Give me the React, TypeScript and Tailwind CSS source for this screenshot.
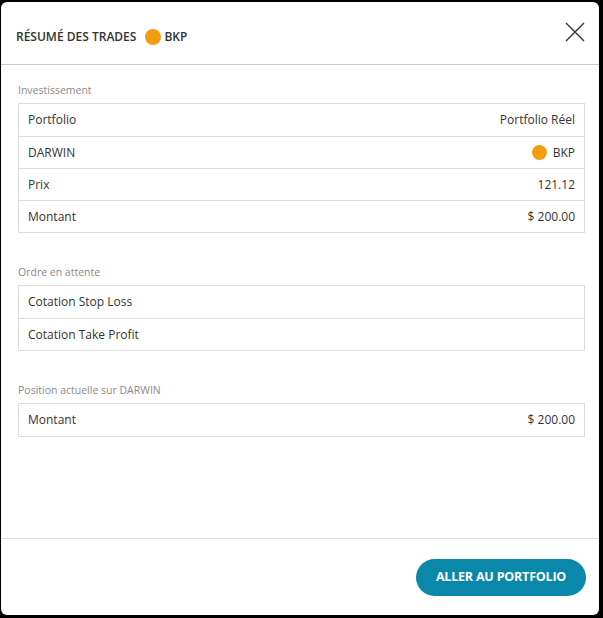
import React from 'react';

type Row = { label: string; value?: React.ReactNode };

const Dot: React.FC<{ className?: string }> = ({ className = '' }) => (
  <span className={`inline-block rounded-full bg-[#f39c12] ${className}`} />
);

const Section: React.FC<{ title: string; rows: Row[]; className?: string }> = ({ title, rows, className = '' }) => (
  <div className={className}>
    <div className="text-[10.5px] leading-[14px] text-[#8a8a8a] mb-[6px]">{title}</div>
    <div className="border border-[#dcdcdc]">
      {rows.map((row, i) => (
        <div
          key={row.label}
          className={`flex items-center justify-between h-[32px] px-[9px] text-[12px] text-[#333] ${
            i > 0 ? 'border-t border-[#dcdcdc]' : ''
          }`}
        >
          <span>{row.label}</span>
          {row.value && <span className="flex items-center">{row.value}</span>}
        </div>
      ))}
    </div>
  </div>
);

const App: React.FC = () => {
  const investment: Row[] = [
    { label: 'Portfolio', value: 'Portfolio Réel' },
    {
      label: 'DARWIN',
      value: (
        <>
          <Dot className="w-[15px] h-[15px] mr-[6px]" />
          BKP
        </>
      ),
    },
    { label: 'Prix', value: '121.12' },
    { label: 'Montant', value: '$ 200.00' },
  ];

  return (
    <div
      className="w-[603px] h-[618px] bg-black pt-[2px] pl-[1px] pr-[4px] pb-[3px]"
      style={{ fontFamily: '"Open Sans", "Noto Sans", sans-serif' }}
    >
      <div className="h-full bg-white rounded-[6px] flex flex-col">
        {/* Header */}
        <div className="h-[63px] border-b border-[#c8c8c8] flex items-start justify-between pl-[15px] pr-[14px]">
          <div className="mt-[27px] h-[16px] flex items-center text-[12px] leading-[16px] font-semibold text-[#333]">
            <span>RÉSUMÉ DES TRADES</span>
            <Dot className="w-[16px] h-[16px] ml-[9px] mr-[3px]" />
            <span>BKP</span>
          </div>
          <button className="mt-[20px] w-[20px] h-[20px] text-[#333]">
            <svg width="20" height="20" viewBox="0 0 20 20" fill="none" stroke="currentColor" strokeWidth="1.4">
              <path d="M1 1 L19 19 M19 1 L1 19" />
            </svg>
          </button>
        </div>

        {/* Body */}
        <div className="flex-1 pl-[17px] pr-[14px] pt-[18px]">
          <Section title="Investissement" rows={investment} />
          <Section
            className="mt-[32px]"
            title="Ordre en attente"
            rows={[{ label: 'Cotation Stop Loss' }, { label: 'Cotation Take Profit' }]}
          />
          <Section
            className="mt-[32px]"
            title="Position actuelle sur DARWIN"
            rows={[{ label: 'Montant', value: '$ 200.00' }]}
          />
        </div>

        {/* Footer */}
        <div className="border-t border-[#dcdcdc] flex justify-end pt-[20px] pb-[19px] pr-[13px]">
          <button className="h-[37px] w-[170px] rounded-full bg-[#0a88aa] text-white text-[12.5px] font-bold tracking-[-0.2px]">
            ALLER AU PORTFOLIO
          </button>
        </div>
      </div>
    </div>
  );
};

export default App;
